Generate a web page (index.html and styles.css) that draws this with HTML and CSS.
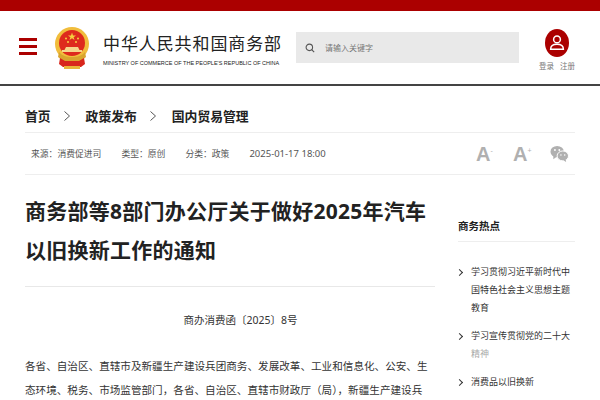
FILE: index.html
```html
<!DOCTYPE html>
<html lang="zh-CN">
<head>
    <meta charset="UTF-8">
    <title>商务部等8部门办公厅关于做好2025年汽车以旧换新工作的通知</title>
    <link rel="stylesheet" href="styles.css">
</head>
<body>
    <div class="topbar"></div>
    <header class="header">
        <div class="menu"><span></span><span></span><span></span></div>
        <svg class="emblem" viewBox="0 0 34 43">
            <ellipse cx="17" cy="17" rx="17" ry="17" fill="#f1bd3c"/>
            <ellipse cx="17" cy="16" rx="13" ry="13" fill="#de2a1d"/>
            <polygon points="17,5.500 18,8.400 21,8.400 18.600,10.200 19.500,13 17,11.300 14.500,13 15.400,10.200 13,8.400 16,8.400" fill="#f6d03f"/>
            <circle cx="11" cy="11.500" r="1" fill="#f6d03f"/>
            <circle cx="23" cy="11.500" r="1" fill="#f6d03f"/>
            <circle cx="13" cy="15" r="1" fill="#f6d03f"/>
            <circle cx="21" cy="15" r="1" fill="#f6d03f"/>
            <path d="M11 20h12l1.500 3H27v2H7v-2h2.500z" fill="#f6d58a"/>
            <path d="M4 25c3 4 8 5 13 5s10-1 13-5l1 5-5 4H8l-5-4z" fill="#d9a52e"/>
            <path d="M5 31l5 3h14l5-3 1 6-4 3H8l-4-3z" fill="#d8261c"/>
            <path d="M9 39h16v3H9z" fill="#e9b53a"/>
        </svg>
        <div class="brand">
            <div class="brand-cn">中华人民共和国商务部</div>
            <div class="brand-en">MINISTRY OF COMMERCE OF THE PEOPLE'S REPUBLIC OF CHINA</div>
        </div>
        <div class="search">
            <svg class="search-icon" viewBox="0 0 12 12">
                <circle cx="5.200" cy="5.200" r="3.900" fill="none" stroke="#555" stroke-width="1.300"/>
                <path d="M8 8l3 3" stroke="#555" stroke-width="1.400"/>
            </svg>
            <span>请输入关键字</span>
        </div>
        <div class="user">
            <div class="avatar">
                <svg viewBox="0 0 24 28">
                    <circle cx="12" cy="8.500" r="4.500" fill="none" stroke="#fff" stroke-width="2"/>
                    <path d="M3.500 21.500c0-5 4-6.500 8.500-6.500s8.500 1.500 8.500 6.500z" fill="none" stroke="#fff" stroke-width="2"/>
                </svg>
            </div>
            <div class="user-links"><span>登录</span><span>注册</span></div>
        </div>
    </header>
    <div class="page">
        <nav class="crumbs">
            <span>首页</span>
            <svg class="crumb-sep" viewBox="0 0 6 10"><path d="M.5.500L5.500 5 .5 9.500" fill="none" stroke="#555"/></svg>
            <span>政策发布</span>
            <svg class="crumb-sep" viewBox="0 0 6 10"><path d="M.5.500L5.500 5 .5 9.500" fill="none" stroke="#555"/></svg>
            <span>国内贸易管理</span>
        </nav>
        <div class="meta">
            <div class="meta-text">
                <span>来源：消费促进司</span>
                <span>类型：原创</span>
                <span>分类：政策</span>
                <span class="date">2025-01-17 18:00</span>
            </div>
            <div class="tools">
                <span class="font-btn">A<sup>-</sup></span>
                <span class="font-btn">A<sup>+</sup></span>
                <svg class="wechat" viewBox="0 0 20 18">
                    <ellipse cx="7.500" cy="6.500" rx="7" ry="6" fill="#b0b0b0"/>
                    <path d="M3.500 10.500v4l3.500-2.500z" fill="#b0b0b0"/>
                    <ellipse cx="13.500" cy="11" rx="6" ry="5.200" fill="#b0b0b0" stroke="#fff"/>
                    <path d="M16.500 14.500l.5 3-3-2z" fill="#b0b0b0"/>
                    <circle cx="5.200" cy="4.800" r="1" fill="#fff"/>
                    <circle cx="9.800" cy="4.800" r="1" fill="#fff"/>
                    <circle cx="11.500" cy="10" r=".8" fill="#fff"/>
                    <circle cx="15.500" cy="10" r=".8" fill="#fff"/>
                </svg>
            </div>
        </div>
        <div class="columns">
            <main class="article">
                <h1>商务部等8部门办公厅关于做好2025年汽车以旧换新工作的通知</h1>
                <p class="doc-no">商办消费函〔2025〕8号</p>
                <p class="body-text">各省、自治区、直辖市及新疆生产建设兵团商务、发展改革、工业和信息化、公安、生态环境、税务、市场监管部门，各省、自治区、直辖市财政厅（局），新疆生产建设兵</p>
            </main>
            <aside class="side">
                <h2>商务热点</h2>
                <ul>
                    <li>学习贯彻习近平新时代中国特色社会主义思想主题教育</li>
                    <li>学习宣传贯彻党的二十大<span class="fade">精神</span></li>
                    <li>消费品以旧换新</li>
                </ul>
            </aside>
        </div>
    </div>
</body>
</html>
```

FILE: styles.css
```css
html, body {
    margin: 0;
    height: 400px;
    overflow: hidden;
}
body {
    background-color: #fff;
    color: #333;
    font-family: "Noto Sans", "Noto Sans CJK SC", sans-serif;
}
.topbar {
    height: 11px;
    background-color: #ab0000;
}
.header {
    display: flex;
    align-items: flex-start;
    height: 73px;
    border-bottom: 2px solid #444;
}
.menu {
    display: flex;
    flex-direction: column;
    gap: 4px;
    width: 18px;
    margin: 27px 0 0 19px;
}
.menu span {
    height: 3px;
    background-color: #ab0000;
}
.emblem {
    width: 34px;
    height: 43px;
    margin: 16px 0 0 18px;
}
.brand {
    width: 179px;
    margin: 21px 0 0 14px;
}
.brand-cn {
    font-size: 17px;
    line-height: 24px;
    letter-spacing: 0.9px;
    color: #222;
    white-space: nowrap;
}
.brand-en {
    font-family: "Liberation Sans", sans-serif;
    font-size: 5.5px;
    line-height: 10px;
    margin-top: 2px;
    color: #222;
    white-space: nowrap;
}
.search {
    display: flex;
    align-items: center;
    width: 223px;
    height: 31px;
    margin: 21px 0 0 14px;
    background-color: #e9e9e9;
    font-size: 8px;
    color: #777;
}
.search-icon {
    width: 10px;
    height: 10px;
    margin: 0 10px 0 9px;
}
.user {
    display: flex;
    flex-direction: column;
    align-items: center;
    margin: 18px 0 0 20px;
}
.avatar {
    display: flex;
    align-items: center;
    justify-content: center;
    width: 24px;
    height: 28px;
    border-radius: 50%;
    background-color: #ab0000;
}
.avatar svg {
    width: 18px;
    height: 21px;
}
.user-links {
    display: flex;
    gap: 6px;
    margin-top: 3px;
    font-size: 7.5px;
    line-height: 12px;
    color: #777;
}
.page {
    width: 550px;
    margin-left: 25px;
}
.crumbs {
    display: flex;
    align-items: center;
    height: 33px;
    padding-top: 13px;
    font-size: 12.800px;
    font-weight: bold;
    color: #222;
    border-bottom: 1px solid #eee;
}
.crumb-sep {
    width: 6px;
    height: 10px;
    margin: 0 16px 0 13px;
}
.meta {
    display: flex;
    align-items: center;
    justify-content: space-between;
    height: 41px;
    border-bottom: 1px solid #eee;
}
.meta-text {
    display: flex;
    align-items: center;
    gap: 20px;
    padding-left: 6px;
    font-size: 8.800px;
    color: #555;
}
.date {
    font-size: 9.500px;
}
.tools {
    display: flex;
    align-items: center;
    gap: 19px;
    padding-right: 6px;
}
.font-btn {
    width: 18px;
    font-family: "Liberation Sans", sans-serif;
    font-size: 20px;
    font-weight: bold;
    line-height: 20px;
    color: #b0b0b0;
}
.font-btn sup {
    font-size: 7px;
    font-weight: normal;
    vertical-align: 8px;
    line-height: 0;
}
.wechat {
    width: 19px;
    height: 18px;
}
.columns {
    display: flex;
    justify-content: space-between;
}
.article {
    width: 410px;
}
.article h1 {
    margin: 17px 0 0;
    padding-bottom: 16px;
    font-size: 21px;
    line-height: 39px;
    font-weight: bold;
    letter-spacing: 0.25px;
    color: #222;
    border-bottom: 1px solid #e8e8e8;
}
.doc-no {
    margin: 25px 0 0;
    text-align: center;
    text-indent: 2em;
    font-size: 10.500px;
    line-height: 16px;
    color: #333;
}
.body-text {
    margin: 26px 0 0;
    font-size: 10.600px;
    line-height: 24px;
    color: #333;
}
.side {
    width: 117px;
}
.side h2 {
    margin: 41px 0 0;
    padding-bottom: 5px;
    font-size: 10.500px;
    line-height: 20px;
    font-weight: bold;
    color: #222;
    border-bottom: 1px solid #eee;
}
.side ul {
    margin: 21px 0 0;
    padding: 0;
    list-style: none;
    font-size: 9px;
    line-height: 18px;
    color: #333;
}
.side li {
    position: relative;
    margin-bottom: 10px;
    padding-left: 13px;
}
.side li::before {
    content: "";
    position: absolute;
    left: -1px;
    top: 7px;
    width: 4px;
    height: 4px;
    border-top: 1px solid #333;
    border-right: 1px solid #333;
    transform: rotate(45deg);
}
.fade {
    display: block;
    color: #aaa;
}
```
